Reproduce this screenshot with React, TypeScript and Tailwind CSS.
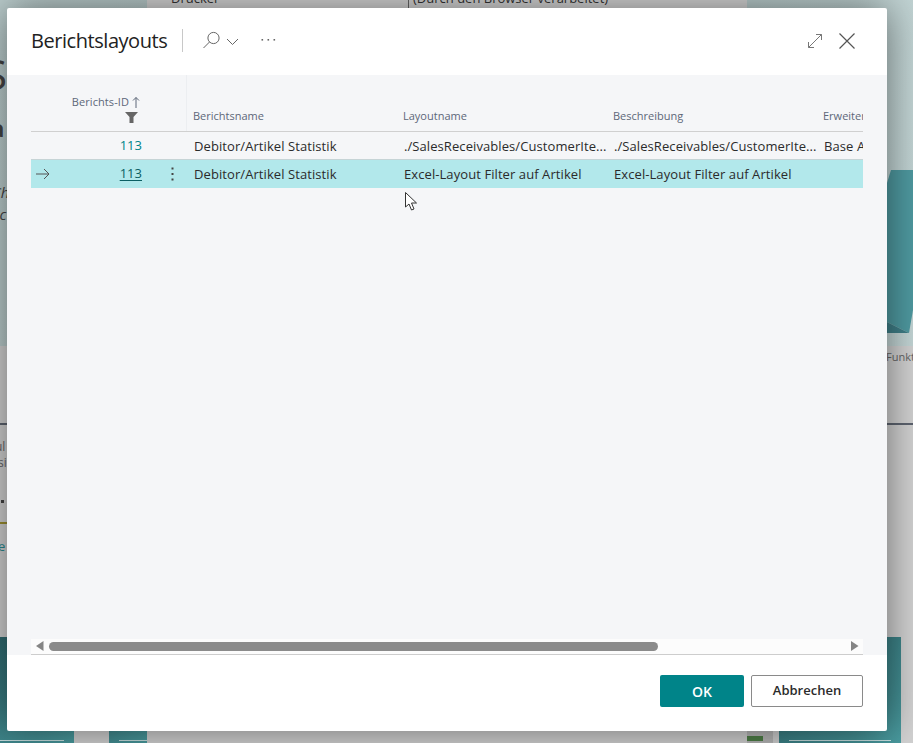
import React from "react";

const font = { fontFamily: '"Open Sans", "Noto Sans", sans-serif' };

function Tile({ className, children }: { className: string; children?: React.ReactNode }) {
  return <div className={`h-full bg-[linear-gradient(135deg,#2f6a70,#4a9ca0)] overflow-hidden ${className}`}>{children}</div>;
}

function HeaderCell({ children, className = "" }: { children: React.ReactNode; className?: string }) {
  return <div className={`flex items-end pb-[7px] px-[6px] text-[11px] leading-[16px] text-[#5d6778] whitespace-nowrap overflow-hidden ${className}`}>{children}</div>;
}

function DataCell({ children, selected = false }: { children?: React.ReactNode; selected?: boolean }) {
  return <div className={`flex items-center pl-[7px] pr-[3px] text-[13px] leading-[18px] tracking-[0.08px] text-[#2b2b2b] whitespace-nowrap overflow-hidden ${selected ? "bg-[#b2e8eb]" : ""}`}>{children}</div>;
}

export default function App() {
  return (
    <div className="relative w-[913px] h-[743px] overflow-hidden bg-[#d2d2d2]" style={font}>
      {/* page behind the dialog */}
      <div className="flex justify-between h-[346px] bg-[linear-gradient(100deg,#bccece,#b0c4c4_55%,#c4d6d6)]">
        <div className="w-[7px] overflow-hidden text-[#444] whitespace-nowrap pt-[52px]">
          <div className="text-[42px] leading-[44px] -ml-[16px]">S</div>
          <div className="mt-[18px] text-[24px] leading-[28px] -ml-[10px] font-bold">a</div>
          <div className="mt-[38px] text-[15px] italic leading-[24px] -ml-[8px]">Ch</div>
          <div className="text-[15px] italic leading-[20px] -ml-[8px]">Sc</div>
        </div>
        <svg width="26" height="346" viewBox="0 0 26 346" className="block">
          <polygon points="0,183 4,170 26,170 26,310 22,333 0,322" fill="#4f9aa1" />
          <polygon points="0,322 0,333 22,333" fill="#3f7f88" />
        </svg>
      </div>
      <div className="flex justify-between h-[291px] text-[#666] text-[12px]">
        <div className="w-[7px] overflow-hidden whitespace-nowrap pt-[77px]">
          <div className="h-[2px] bg-[#5d6470]" />
          <div className="mt-[14px] leading-[16px] -ml-[5px]">ul</div>
          <div className="leading-[16px] -ml-[2px]">si</div>
          <div className="mt-[29px] h-[3px] w-[3px] ml-[1px] bg-[#444]" />
          <div className="mt-[19px] h-[2px] bg-[#9c8f30]" />
          <div className="mt-[14px] -ml-[2px] text-[#2b8a90] text-[13px] leading-[16px]">e</div>
        </div>
        <div className="w-[26px] overflow-hidden whitespace-nowrap">
          <div className="mt-[3px] -ml-[1px] text-[11px] leading-[16px]">Funkt</div>
          <div className="mt-[58px] h-[2px] bg-[#5d6470]" />
        </div>
      </div>
      <div className="flex h-[106px]">
        <Tile className="w-[74px] flex flex-col justify-end pb-[2px]">
          <div className="w-[64px] h-[1px] bg-white/70" />
        </Tile>
        <Tile className="w-[38px] ml-[35px] flex flex-col justify-end items-end pb-[2px]">
          <div className="w-[28px] h-[1px] bg-white/70" />
        </Tile>
        <div className="ml-[600px] w-[26px] h-full flex flex-col justify-end pb-[2px] bg-[#b8b8b8]">
          <div className="h-[5px] w-[16px] bg-[#4f8048]" />
        </div>
        <Tile className="w-[122px] ml-[6px] flex flex-col justify-end items-center pb-[2px]">
          <div className="w-[102px] h-[1px] bg-white/70" />
        </Tile>
      </div>

      {/* dialog behind the dialog */}
      <div className="absolute left-[147px] top-0 w-[600px] h-[20px] bg-[#d6d6d6] text-[13px] text-[#333] overflow-hidden">
        <span className="absolute left-[24px] -top-[11px]">Drucker</span>
        <span className="absolute left-[261px] top-0 h-full border-l border-[#666]" />
        <span className="absolute left-[266px] -top-[11px] whitespace-nowrap">(Durch den Browser verarbeitet)</span>
      </div>

      {/* active dialog */}
      <div className="absolute left-[7px] top-[8px] w-[880px] h-[723px] bg-white flex flex-col rounded-[2px] shadow-[0_0_40px_rgba(0,0,0,0.5)]">
        <div className="h-[67px] shrink-0 flex items-center pl-[24px] pr-[32px] pb-[2px]">
          <div className="w-[137px] whitespace-nowrap text-[20px] leading-[28px] font-medium text-[#222] tracking-[-0.45px]">Berichtslayouts</div>
          <div className="ml-[14px] w-px h-[23px] bg-[#c8c8c8]" />
          <svg width="40" height="24" viewBox="0 0 40 24" className="ml-[19px] text-[#666]" fill="none" stroke="currentColor" strokeWidth="1">
            <circle cx="11.5" cy="9" r="5.6" />
            <path d="M7.5 13 1.5 19" />
            <path d="m25 10 5.5 5.5L36 10" />
          </svg>
          <svg width="16" height="4" viewBox="0 0 16 4" className="ml-[19px] mb-[2px] text-[#666]" fill="currentColor">
            <rect x="0.5" y="1" width="1.6" height="1.6" />
            <rect x="6.5" y="1" width="1.6" height="1.6" />
            <rect x="12.5" y="1" width="1.6" height="1.6" />
          </svg>
          <svg width="16" height="16" viewBox="0 0 16 16" className="ml-auto text-[#777]" fill="none" stroke="currentColor" strokeWidth="1">
            <path d="M1.5 14.5 14.5 1.5M9 1.5h5.5V7M1.5 9v5.5H7" />
          </svg>
          <svg width="16" height="16" viewBox="0 0 16 16" className="ml-[16px] text-[#555]" fill="none" stroke="currentColor" strokeWidth="1.2">
            <path d="m.5.5 15 15M15.500.5l-15 15" />
          </svg>
        </div>

        <div className="flex-1 bg-[#f5f6f8] px-[24px] flex flex-col">
          <div className="flex-1">
            <div className="grid grid-cols-[127px_29px_210px_210px_210px_46px] grid-rows-[56px_28px_29px]">
              <div className="relative">
                <div className="absolute right-[18px] top-[20px] flex items-center text-[11px] leading-[14px] text-[#5d6778] whitespace-nowrap tracking-[0.08px]">
                  Berichts-ID
                  <svg width="8" height="12" viewBox="0 0 8 12" className="ml-[3px]" fill="none" stroke="#5d6778" strokeWidth="1">
                    <path d="M4 12V1.500M1 4.500 4 1.500l3 3" />
                  </svg>
                </div>
                <svg width="13" height="11" viewBox="0 0 13 11" className="absolute left-[94px] top-[37px]" fill="#666">
                  <path d="M0 0h13L8.500 5v6h-4V5z" />
                </svg>
              </div>
              <div className="border-r border-[#eceef1]" />
              <HeaderCell>Berichtsname</HeaderCell>
              <HeaderCell>Layoutname</HeaderCell>
              <HeaderCell>Beschreibung</HeaderCell>
              <HeaderCell>Erweiterung</HeaderCell>

              <div className="col-span-2 border-t border-[#d0d0d0] flex items-center justify-end pr-[45px] text-[13px] text-[#008489]">113</div>
              <div className="col-span-4 grid grid-cols-[210px_210px_210px_46px] border-t border-[#d0d0d0]">
                <DataCell>Debitor/Artikel Statistik</DataCell>
                <DataCell>./SalesReceivables/CustomerIte...</DataCell>
                <DataCell>./SalesReceivables/CustomerIte...</DataCell>
                <DataCell>Base Application</DataCell>
              </div>

              <div className="bg-[#b2e8eb] border-t border-[#c6d4d6] flex items-center justify-between pl-[5px] pr-[16px] text-[13px] text-[#0b5f63]">
                <svg width="14" height="12" viewBox="0 0 14 12" fill="none" stroke="#555" strokeWidth="1">
                  <path d="M0 6h13M8 1l5 5-5 5" />
                </svg>
                <span className="underline underline-offset-2">113</span>
              </div>
              <div className="bg-[#b2e8eb] border-t border-[#c6d4d6] flex items-center justify-center">
                <svg width="3" height="14" viewBox="0 0 3 14" fill="#444">
                  <rect x="0.500" y="0.500" width="2" height="2" />
                  <rect x="0.500" y="6" width="2" height="2" />
                  <rect x="0.500" y="11.500" width="2" height="2" />
                </svg>
              </div>
              <div className="col-span-4 grid grid-cols-[210px_210px_210px_46px] bg-[#b2e8eb] border-t border-[#c6d4d6]">
                <DataCell selected>Debitor/Artikel Statistik</DataCell>
                <DataCell selected>Excel-Layout Filter auf Artikel</DataCell>
                <DataCell selected>Excel-Layout Filter auf Artikel</DataCell>
                <DataCell selected />
              </div>
            </div>
          </div>

          <div className="h-[16px] bg-[#fcfcfc] border-b border-[#cdcdcd] flex items-center pl-[5px] pr-[4px] pb-[1px]">
            <svg width="8" height="10" viewBox="0 0 8 10" fill="#858585"><path d="M7.500 0v10L0 5z" /></svg>
            <div className="flex-1 ml-[5px]">
              <div className="w-[609px] h-[9px] rounded-full bg-[#8b8b8b]" />
            </div>
            <svg width="8" height="10" viewBox="0 0 8 10" fill="#858585"><path d="M0 0v10l7.500-5z" /></svg>
          </div>
        </div>

        <div className="h-[76px] shrink-0 flex items-start justify-end gap-[7px] pt-[20px] pr-[24px]">
          <button className="w-[84px] h-[32px] rounded-[2px] bg-[#008489] text-white text-[14px] font-semibold">OK</button>
          <button className="w-[112px] h-[32px] rounded-[2px] bg-white border border-[#8a8a8a] text-[#2b2b2b] text-[13px] font-semibold">Abbrechen</button>
        </div>
      </div>

      {/* mouse pointer */}
      <svg width="13" height="20" viewBox="0 0 13 20" className="absolute left-[405px] top-[192px]" fill="#fff" stroke="#333" strokeWidth="1">
        <path d="M.5.500v14.500l3.500-3 2.500 6 2.500-1-2.500-6h5z" />
      </svg>
    </div>
  );
}
